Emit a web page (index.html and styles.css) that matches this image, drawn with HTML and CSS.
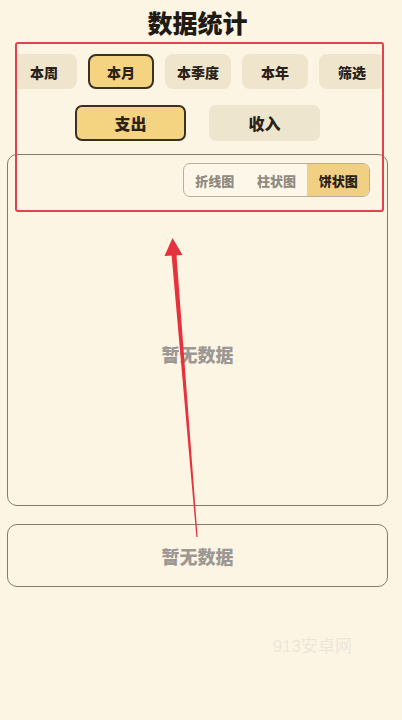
FILE: index.html
```html
<!DOCTYPE html>
<html lang="zh">
<head>
<meta charset="utf-8">
<title>数据统计</title>
<link rel="stylesheet" href="styles.css">
</head>
<body>
<div class="page">
  <h1 class="title">数据统计</h1>
  <div class="tabs">
    <div class="tabs-inner">
      <div class="tab">本周</div>
      <div class="tab active">本月</div>
      <div class="tab">本季度</div>
      <div class="tab">本年</div>
      <div class="tab">筛选</div>
    </div>
  </div>
  <div class="types">
    <div class="type active">支出</div>
    <div class="type">收入</div>
  </div>
  <div class="card chart-card">
    <div class="seg-row">
      <div class="seg">
        <div class="seg-item">折线图</div>
        <div class="seg-item">柱状图</div>
        <div class="seg-item active">饼状图</div>
      </div>
    </div>
    <div class="empty chart-empty">暂无数据</div>
  </div>
  <div class="card list-card">
    <div class="empty">暂无数据</div>
  </div>
  <div class="watermark">913安卓网</div>
</div>
<div class="highlight"></div>
<svg class="arrow" width="402" height="720" viewBox="0 0 402 720">
  <polygon points="171.6,255 176.4,254 197.6,537 196.4,537" fill="#e5323d"/>
  <polygon points="172.5,238 164.5,256 182.5,255" fill="#e5323d"/>
</svg>
</body>
</html>
```

FILE: styles.css
```css
* { box-sizing: border-box; }
html, body { margin: 0; padding: 0; }
body {
  background: #fdf5e4;
  font-family: "Noto Sans CJK SC", "Noto Sans", sans-serif;
  color: #231c14;
  width: 402px;
  height: 720px;
  overflow: hidden;
  position: relative;
}
.page {
  padding: 0 14px 0 7px;
}
.title {
  margin: 0;
  height: 44px;
  line-height: 44px;
  font-size: 25px;
  font-weight: 900;
  text-align: center;
  color: #1f1a13;
}
.tabs {
  margin: 10px 0 0 8px;
  width: 368px;
  overflow: hidden;
}
.tabs-inner {
  display: flex;
  gap: 11px;
  margin-left: -4px;
  width: 420px;
}
.tab {
  flex: 0 0 66px;
  height: 35px;
  border-radius: 8px;
  background: #efe5cd;
  display: flex;
  align-items: center;
  justify-content: center;
  font-size: 14px;
  font-weight: 900;
  color: #2a2219;
}
.tab.active {
  background: #f4d381;
  border: 2px solid #3a3024;
}
.types {
  display: flex;
  justify-content: center;
  gap: 23px;
  margin-top: 16px;
}
.type {
  width: 111px;
  height: 36px;
  border-radius: 7px;
  background: #eee5cf;
  display: flex;
  align-items: center;
  justify-content: center;
  font-size: 16px;
  font-weight: 900;
  color: #2a2219;
}
.type.active {
  background: #f4d381;
  border: 2px solid #3a3024;
}
.card {
  border: 1px solid #857b6c;
  border-radius: 10px;
}
.chart-card {
  margin-top: 13px;
  height: 352px;
  display: flex;
  flex-direction: column;
}
.seg-row {
  display: flex;
  justify-content: flex-end;
  padding: 8px 17px 0 0;
}
.seg {
  display: flex;
  width: 187px;
  height: 34px;
  border: 1px solid #b9af9f;
  border-radius: 7px;
  overflow: hidden;
  background: #fdf7e9;
}
.seg-item {
  flex: 1;
  display: flex;
  align-items: center;
  justify-content: center;
  font-size: 13px;
  font-weight: 900;
  color: #918a80;
}
.seg-item.active {
  background: #f1d083;
  color: #2a2219;
}
.empty {
  display: flex;
  align-items: center;
  justify-content: center;
  font-size: 18px;
  font-weight: 900;
  color: #9c9893;
}
.chart-empty {
  flex: 1;
  padding-top: 6px;
}
.list-card {
  margin-top: 18px;
  height: 63px;
  display: flex;
  flex-direction: column;
}
.list-card .empty {
  flex: 1;
}
.watermark {
  margin-top: 49px;
  text-align: right;
  padding-right: 36px;
  font-family: "Liberation Sans", "Noto Sans CJK SC", sans-serif;
  font-size: 17px;
  line-height: 22px;
  color: #ece6d9;
}
.highlight {
  position: absolute;
  left: 15px;
  top: 42px;
  width: 369px;
  height: 170px;
  border: 2px solid #e0424e;
  border-radius: 3px;
  pointer-events: none;
}
.arrow {
  position: absolute;
  left: 0;
  top: 0;
  pointer-events: none;
}
```
